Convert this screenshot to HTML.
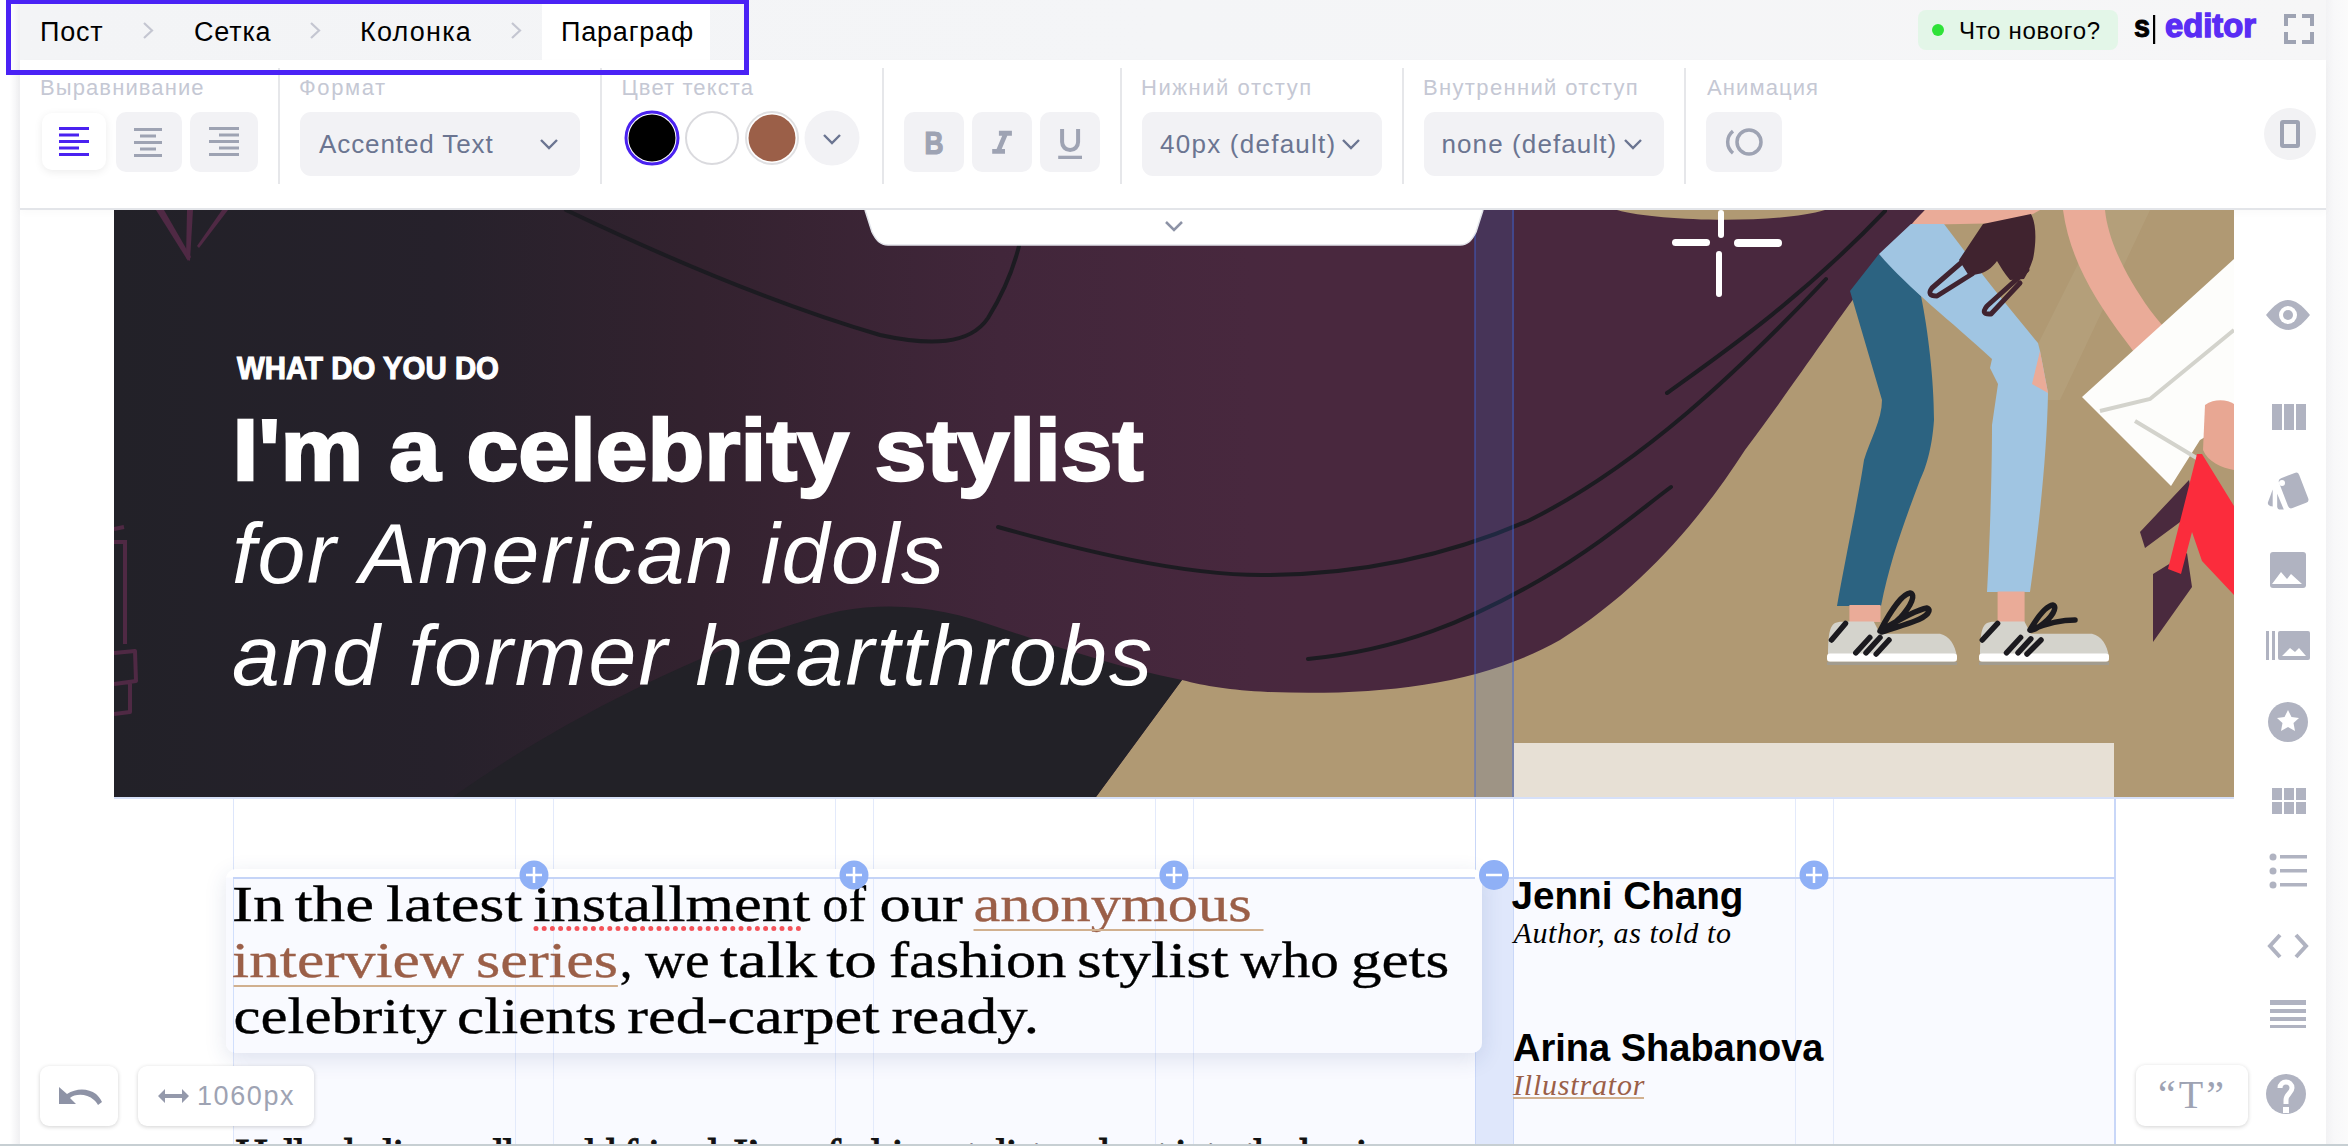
<!DOCTYPE html>
<html><head><meta charset="utf-8">
<style>
*{box-sizing:border-box;margin:0;padding:0}
html,body{width:2348px;height:1146px;overflow:hidden;background:#fff;font-family:"Liberation Sans",sans-serif}
.a{position:absolute}
.lbl{position:absolute;top:73px;font-size:22px;letter-spacing:1.1px;color:#c5c8d4;line-height:30px;white-space:nowrap}
.sep{position:absolute;top:68px;width:2px;height:116px;background:#e6e7ea}
.btn{position:absolute;top:112px;height:60px;background:#f2f2f5;border-radius:10px}
.dd{position:absolute;top:112px;height:64px;background:#f2f2f5;border-radius:11px;font-size:26px;color:#6b7591;line-height:64px;white-space:nowrap;letter-spacing:.8px}
.crumb{position:absolute;top:14px;font-size:27px;line-height:36px;color:#000;white-space:nowrap;letter-spacing:.8px}
.gl{position:absolute;top:797px;width:1px;height:347px;background:#e3eafb}
.sb{position:absolute;fill:#b0b3c1}
</style></head><body>
<!-- left & right outer shadows -->
<div class="a" style="left:0;top:0;width:20px;height:1146px;background:linear-gradient(90deg,#fff 0,#fff 10px,#f1f1f3 19px)"></div>
<div class="a" style="left:2326px;top:0;width:22px;height:1146px;background:linear-gradient(90deg,#f2f2f4 0,#f8f8f9 8px,#fbfbfb 22px)"></div>
<!-- top bar -->
<div class="a" style="left:20px;top:0;width:2306px;height:60px;background:linear-gradient(90deg,#f3f4f6 0,#f4f5f7 50%,#f6f6f7 100%)"></div>
<div class="a" style="left:542px;top:0;width:168px;height:60px;background:#fff"></div>
<div class="crumb" style="left:40px">Пост</div>
<div class="crumb" style="left:194px">Сетка</div>
<div class="crumb" style="left:360px;letter-spacing:1.2px">Колонка</div>
<div class="crumb" style="left:561px">Параграф</div>
<svg class="a" style="left:0;top:0" width="760" height="60"><g fill="none" stroke="#c4c6d1" stroke-width="2.2"><path d="M144 23l8 7.5-8 7.5M311 23l8 7.5-8 7.5M512 23l8 7.5-8 7.5"/></g></svg>
<!-- whats new -->
<div class="a" style="left:1918px;top:10px;width:200px;height:40px;background:#e3f6e8;border-radius:8px"></div>
<div class="a" style="left:1932px;top:24px;width:12px;height:12px;border-radius:50%;background:#2ee238"></div>
<div class="a" style="left:1959px;top:14px;font-size:24px;line-height:34px;letter-spacing:.7px;color:#000;white-space:nowrap">Что нового?</div>
<svg class="a" style="left:2120px;top:0" width="210" height="60">
<text x="14" y="37" font-family="Liberation Sans" font-weight="bold" font-size="32" fill="#000" stroke="#000" stroke-width="1" textLength="16" lengthAdjust="spacingAndGlyphs">s</text>
<rect x="33" y="15" width="2.2" height="29" fill="#000"/>
<text x="45" y="37" font-family="Liberation Sans" font-weight="bold" font-size="33" fill="#5a2df4" stroke="#5a2df4" stroke-width="1.4" textLength="91" lengthAdjust="spacingAndGlyphs">editor</text>
<g fill="none" stroke="#9ea3b3" stroke-width="4"><path d="M166 26V16H176M182 16H192V26M192 32V42H182M176 42H166V32"/></g>
</svg>
<!-- toolbar -->
<div class="a" style="left:20px;top:60px;width:2306px;height:150px;background:#fff;border-bottom:2px solid #e3e5e9;box-shadow:0 3px 8px rgba(0,0,0,.025)"></div>
<div class="lbl" style="left:40px">Выравнивание</div>
<div class="lbl" style="left:299px;letter-spacing:1.6px">Формат</div>
<div class="lbl" style="left:621.5px">Цвет текста</div>
<div class="lbl" style="left:1141px;letter-spacing:1.55px">Нижний отступ</div>
<div class="lbl" style="left:1423px;letter-spacing:1.35px">Внутренний отступ</div>
<div class="lbl" style="left:1707px">Анимация</div>
<div class="sep" style="left:278px"></div>
<div class="sep" style="left:600px"></div>
<div class="sep" style="left:882px"></div>
<div class="sep" style="left:1120px"></div>
<div class="sep" style="left:1402px"></div>
<div class="sep" style="left:1684px"></div>
<!-- align buttons -->
<div class="a" style="left:42px;top:113px;width:64px;height:57px;background:#fff;border-radius:10px;box-shadow:0 2px 8px rgba(0,0,0,.08)"></div>
<div class="btn" style="left:116px;width:66px"></div>
<div class="btn" style="left:190px;width:68px"></div>
<svg class="a" style="left:0;top:100px" width="280" height="90">
<g fill="#4a22f0"><rect x="59" y="27" width="30" height="3"/><rect x="59" y="33.5" width="20" height="3"/><rect x="59" y="40" width="30" height="3"/><rect x="59" y="46.5" width="20" height="3"/><rect x="59" y="53" width="30" height="3"/></g>
<g fill="#9ea3b3"><rect x="134" y="28" width="28" height="3"/><rect x="140" y="34.5" width="16" height="3"/><rect x="134" y="41" width="28" height="3"/><rect x="140" y="47.5" width="16" height="3"/><rect x="134" y="54" width="28" height="3"/></g>
<g fill="#9ea3b3"><rect x="209" y="27" width="30" height="3"/><rect x="219" y="33.5" width="20" height="3"/><rect x="209" y="40" width="30" height="3"/><rect x="219" y="46.5" width="20" height="3"/><rect x="209" y="53" width="30" height="3"/></g>
</svg>
<!-- format dropdown -->
<div class="dd" style="left:300px;width:280px;padding-left:19px;font-size:26px;letter-spacing:.9px">Accented Text</div>
<svg class="a" style="left:538px;top:136px" width="22" height="16"><path d="M3 4l8 8 8-8" fill="none" stroke="#6b7591" stroke-width="2.4"/></svg>
<!-- colours -->
<svg class="a" style="left:620px;top:106px" width="250" height="66">
<circle cx="32" cy="32" r="26" fill="#fff" stroke="#4a22f0" stroke-width="3"/>
<circle cx="32" cy="32" r="23.5" fill="#000"/>
<circle cx="92" cy="32" r="26" fill="#fff" stroke="#dadade" stroke-width="2"/>
<circle cx="152" cy="32" r="26" fill="#fff" stroke="#e0e0e2" stroke-width="2"/>
<circle cx="152" cy="32" r="23.5" fill="#9b5f48"/>
<circle cx="212" cy="32" r="27.5" fill="#f2f2f5"/>
<path d="M204 29l8 8 8-8" fill="none" stroke="#6b7591" stroke-width="2.4"/>
</svg>
<!-- B I U -->
<div class="btn" style="left:904px;width:60px"></div>
<div class="btn" style="left:972px;width:60px"></div>
<div class="btn" style="left:1040px;width:60px"></div>
<svg class="a" style="left:900px;top:120px" width="200" height="44">
<text x="24.5" y="34" font-family="Liberation Sans" font-weight="bold" font-size="31" fill="#9ea3b3" stroke="#9ea3b3" stroke-width="1.2" textLength="19" lengthAdjust="spacingAndGlyphs">B</text>
<path d="M98.9 10.7H111.9V15.8H107.3L101.7 29H105V33.7H92.2V29H96.6L102.2 15.8H98.9Z" fill="#9ea3b3"/>
<path d="M162.1 8.9V22.1A8 8 0 0 0 178.1 22.1V8.9" fill="none" stroke="#9ea3b3" stroke-width="4"/>
<rect x="158.2" y="35.7" width="23.8" height="3.3" fill="#9ea3b3"/>
</svg>
<!-- spacing dropdowns -->
<div class="dd" style="left:1142px;width:240px;padding-left:18px;letter-spacing:1.25px">40px (default)</div>
<svg class="a" style="left:1340px;top:136px" width="22" height="16"><path d="M3 4l8 8 8-8" fill="none" stroke="#6b7591" stroke-width="2.4"/></svg>
<div class="dd" style="left:1424px;width:240px;padding-left:17.5px;letter-spacing:1.1px">none (default)</div>
<svg class="a" style="left:1622px;top:136px" width="22" height="16"><path d="M3 4l8 8 8-8" fill="none" stroke="#6b7591" stroke-width="2.4"/></svg>
<!-- animation -->
<div class="btn" style="left:1706px;width:76px"></div>
<svg class="a" style="left:1716px;top:120px" width="56" height="44"><circle cx="33" cy="22" r="12" fill="none" stroke="#9ea3b3" stroke-width="3.5"/><path d="M17 11a14 14 0 0 0 0 22" fill="none" stroke="#9ea3b3" stroke-width="3.5"/></svg>
<!-- device -->
<div class="a" style="left:2264px;top:108px;width:52px;height:52px;border-radius:50%;background:#f2f2f4"></div>
<div class="a" style="left:2280px;top:120px;width:20px;height:28px;border:4px solid #9ea3b3;border-radius:3px"></div>

<!-- HERO -->
<svg class="a" style="left:114px;top:210px" width="2120" height="587" viewBox="114 210 2120 587">
<defs>
<linearGradient id="hg" x1="114" y1="0" x2="1300" y2="0" gradientUnits="userSpaceOnUse">
<stop offset="0" stop-color="#222128"/><stop offset=".275" stop-color="#26212b"/><stop offset=".494" stop-color="#33222f"/><stop offset=".747" stop-color="#41263a"/><stop offset=".958" stop-color="#48283e"/><stop offset="1" stop-color="#49283e"/></linearGradient>
<linearGradient id="tg" x1="0" y1="210" x2="0" y2="420" gradientUnits="userSpaceOnUse"><stop offset="0" stop-color="#bba784"/><stop offset="1" stop-color="#b09973"/></linearGradient>
</defs>
<rect x="114" y="210" width="2120" height="587" fill="#b09973"/>
<!-- lighter diagonal stripe top right -->
<path d="M2105 210L2150 210 2060 400 2010 400Z" fill="#b8a47f" opacity=".6"/>
<!-- right pink arm -->
<path d="M2063 210C2070 260 2095 300 2125 340 2140 360 2155 380 2165 392L2200 372C2185 350 2165 330 2150 310 2125 275 2108 240 2105 210Z" fill="#eaab98"/>
<!-- cape + dark left region -->
<path d="M114 210H1617C1660 222 1780 224 1825 210H1925C1905 236 1880 262 1860 290 1830 330 1790 390 1745 450 1700 520 1640 590 1560 640 1480 685 1380 696 1268 692 1230 690 1205 686 1182 680L1096 797H114Z" fill="url(#hg)"/>
<!-- dark hill bottom -->
<path d="M453 797C560 720 720 640 840 611 900 600 950 610 1000 628 1060 648 1120 668 1182 680L1096 797Z" fill="#222127"/>
<!-- lines on cape -->
<g fill="none" stroke="#1c1b21" stroke-width="4" stroke-linecap="round">
<path d="M566 210C650 250 770 303 880 335 930 346 970 345 988 318 1004 292 1014 266 1019 246"/>
<path d="M998 527C1080 550 1180 575 1262 575 1360 575 1450 555 1530 520 1640 465 1740 370 1826 279"/>
<path d="M1308 659C1400 650 1470 620 1540 580 1600 545 1640 510 1671 487"/>
<path d="M1667 393C1720 355 1800 300 1885 211"/>
</g>
<!-- sparkle -->
<g fill="#fff"><rect x="1672" y="239" width="38" height="7" rx="3.5"/><rect x="1734" y="239" width="48" height="8" rx="4"/><rect x="1718" y="210" width="6" height="28" rx="3"/><rect x="1716" y="251" width="6" height="46" rx="3"/></g>
<!-- top pink arm band -->
<path d="M1925 210H2040C2030 216 2020 220 2010 223L1911 225C1915 220 1920 215 1925 210Z" fill="#eaab98"/>
<!-- teal leg -->
<path d="M1879 254L1921 296C1928 330 1934 380 1934 420 1932 450 1925 470 1920 480 1905 520 1890 560 1881 606H1837C1845 560 1858 500 1864 460 1870 440 1882 420 1882 400L1850 291Z" fill="#2c6381"/>
<!-- light blue leg -->
<path d="M1911 224H1944L1963 249C1990 285 2015 315 2038 343L2040 351 2048 393C2047 450 2040 520 2030 592H1987C1990 540 1992 470 1992 425L1998 384 1990 368 1992 359C1950 320 1910 290 1879 254Z" fill="#a0c5e2"/>
<!-- knee skin -->
<path d="M2040 351L2048 393 2032 384Z" fill="#eaab98"/>
<!-- ankle skin -->
<path d="M1849.4 605H1880.5V622H1849.4Z M1997.6 591.5H2024.6V622H1997.6Z" fill="#eaab98"/>
<!-- hand -->
<path d="M1983 224L2031 214C2037 225 2036 245 2033 259 2030 268 2027 274 2024 279L2010 280C2004 273 2000 266 1997 261 1992 268 1985 273 1978 274L1969 276 1959 260Z" fill="#40232f"/>
<g fill="none" stroke="#40232f" stroke-width="5" stroke-linejoin="round" stroke-linecap="round">
<path d="M1962 262L1932 288Q1926 296 1937 296L1972 274"/>
<path d="M2027 270L1987 306Q1980 315 1991 314L2020 283"/>
</g>
<!-- bag -->
<path d="M2082 397L2234 259V420L2200 440 2171 486Z" fill="#fdfdfb"/>
<path d="M2100 411L2150 399 2234 330M2135 421L2200 460" fill="none" stroke="#d3d3cc" stroke-width="4"/>
<path d="M2205 405C2215 398 2228 400 2234 404V470C2222 468 2208 462 2203 450Z" fill="#e8a793"/>
<!-- shoes on right -->
<path d="M2140 532L2189 480 2195 511 2145 548Z M2153 574L2187 553 2192 587 2153 642Z" fill="#4a2a3e"/>
<path d="M2168 569L2197 454H2202L2234 506V595L2202 561 2192 532 2181 574Z" fill="#fb2c3c"/>
<!-- sneakers -->
<g>
<path d="M1828 656C1828 640 1829 630 1832 626 1834 622 1840 621.5 1848 621.5H1873.7L1880 633.7H1940C1950 636 1955 645 1957 656.7Z" fill="#d4d3cc"/>
<rect x="1827" y="653.5" width="130" height="8.3" rx="3" fill="#fff"/>
<rect x="1827" y="661.8" width="130" height="3.2" fill="#a29c8f"/>
<path d="M1980 656C1980 640 1981 630 1984 626 1986 622 1992 621.5 2000 621.5H2024.4L2030.8 633.7H2092C2102 636 2107 645 2109 656.7Z" fill="#d4d3cc"/>
<rect x="1979" y="653.5" width="130" height="8.3" rx="3" fill="#fff"/>
<rect x="1979" y="661.8" width="130" height="3.2" fill="#a29c8f"/>
<g fill="none" stroke="#1b1a1f" stroke-width="5.5" stroke-linecap="round" stroke-linejoin="round">
<path d="M1880 631C1890 612 1902 594 1910 593 1916 594 1912 605 1900 618 1893 625 1886 630 1880 631 1895 622 1915 610 1927 608 1932 610 1928 616 1915 621 1905 625 1893 628 1882 632"/>
<path d="M1831.5 640L1845.5 623.4M1855.8 652.8L1869.8 637.5M1866 652.8L1880 637.5M1876.2 654L1889 640"/>
<path d="M2030 630C2037 618 2046 606 2053 605 2058 607 2052 618 2040 626 2034 630 2031 631 2030 630 2045 624 2062 620 2075 620"/>
<path d="M1982.3 640L1997.6 623.4M2006.5 652.8L2020.6 637.5M2018 652.8L2030.8 638.8M2027 654L2041 640"/>
</g>
</g>
<!-- beige platform -->
<rect x="1514" y="743" width="600" height="54" fill="#e7e0d5"/>
<!-- left faint decorations -->
<g fill="#4f2944">
<path d="M156 210H164L191 257 188 261Z"/><path d="M187 210H193L190 261 186 258Z"/><path d="M222 210H228L199 248 197 246Z"/>
</g>
<g fill="none" stroke="#4f2944" stroke-width="4" stroke-linejoin="round">
<path d="M114 529L124 527M114 542H127M125 542V644"/>
<path d="M114 653L135 651 136 681 114 684M114 684L130 682 130 712 114 714"/>
</g>
<!-- gutter overlay -->
<rect x="1475" y="210" width="39" height="587" fill="rgb(60,120,240)" fill-opacity=".15"/>
<rect x="1474" y="210" width="2" height="587" fill="rgb(60,100,220)" fill-opacity=".4"/>
<rect x="1512" y="210" width="2" height="587" fill="rgb(60,100,220)" fill-opacity=".4"/>
<!-- white tab -->
<path d="M865 210L872 232C876 240 880 245 888 245H1460C1468 245 1472 240 1476 232L1483 210" fill="#fff" stroke="#e2e4ea" stroke-width="1.5"/>
<path d="M1166 222l8 8 8-8" fill="none" stroke="#8d93a6" stroke-width="2.5"/>
</svg>

<!-- content area -->
<div class="a" style="left:233px;top:878px;width:1882px;height:266px;background:#f9faff"></div>
<div class="a" style="left:1475px;top:878px;width:39px;height:266px;background:#dfe7fb"></div>
<div class="gl" style="left:233px;background:#dde6fb"></div>
<div class="gl" style="left:515px"></div><div class="gl" style="left:553px"></div>
<div class="gl" style="left:835px"></div><div class="gl" style="left:873px"></div>
<div class="gl" style="left:1155px"></div><div class="gl" style="left:1193px"></div>
<div class="gl" style="left:1475px;background:#c9d7f8"></div><div class="gl" style="left:1513px;background:#c9d7f8"></div>
<div class="gl" style="left:1795px"></div><div class="gl" style="left:1833px"></div>
<div class="gl" style="left:2114px;width:2px;background:#c9d7f8"></div>
<div class="a" style="left:114px;top:797px;width:2120px;height:2px;background:#d6e0f8"></div>
<div class="a" style="left:233px;top:877px;width:1882px;height:2px;background:#c5d4f7"></div>
<!-- paragraph card -->
<div class="a" style="left:226px;top:869px;width:1256px;height:184px;background:linear-gradient(#fff 0,#fff 8px,#f9faff 9px);border-radius:10px;box-shadow:0 6px 22px rgba(40,60,120,.13)"></div>
<div class="a" style="left:233px;top:877px;width:1242px;height:2px;background:#c5d4f7"></div>
<div class="a" style="left:515px;top:879px;width:1px;height:174px;background:rgba(170,195,250,.3)"></div><div class="a" style="left:553px;top:879px;width:1px;height:174px;background:rgba(170,195,250,.3)"></div>
<div class="a" style="left:835px;top:879px;width:1px;height:174px;background:rgba(170,195,250,.3)"></div><div class="a" style="left:873px;top:879px;width:1px;height:174px;background:rgba(170,195,250,.3)"></div>
<div class="a" style="left:1155px;top:879px;width:1px;height:174px;background:rgba(170,195,250,.3)"></div><div class="a" style="left:1193px;top:879px;width:1px;height:174px;background:rgba(170,195,250,.3)"></div>
<div class="a" style="left:233px;top:879px;width:1px;height:174px;background:rgba(170,195,250,.5)"></div>
<svg class="a" style="left:0;top:0" width="2348" height="1146">
<g font-family="Liberation Serif" font-size="51" fill="#000" stroke="#000" stroke-width=".35">
<text x="232.1" y="920.8" textLength="52.4" lengthAdjust="spacingAndGlyphs">In</text>
<text x="294.8" y="920.8" textLength="79.3" lengthAdjust="spacingAndGlyphs">the</text>
<text x="386.1" y="920.8" textLength="136.4" lengthAdjust="spacingAndGlyphs">latest</text>
<text x="533.3" y="920.8" textLength="276.9" lengthAdjust="spacingAndGlyphs">installment</text>
<text x="822.2" y="920.8" textLength="43.8" lengthAdjust="spacingAndGlyphs">of</text>
<text x="879.4" y="920.8" textLength="83.4" lengthAdjust="spacingAndGlyphs">our</text>
<text x="973.4" y="920.8" textLength="278.3" lengthAdjust="spacingAndGlyphs" fill="#9b5f48" stroke="#9b5f48">anonymous</text>
<text x="232.1" y="977.3" textLength="232.0" lengthAdjust="spacingAndGlyphs" fill="#9b5f48" stroke="#9b5f48">interview</text>
<text x="476.1" y="977.3" textLength="142.0" lengthAdjust="spacingAndGlyphs" fill="#9b5f48" stroke="#9b5f48">series</text>
<text x="619.7" y="977.3">,</text>
<text x="645.0" y="977.3" textLength="64.4" lengthAdjust="spacingAndGlyphs">we</text>
<text x="720.0" y="977.3" textLength="97.0" lengthAdjust="spacingAndGlyphs">talk</text>
<text x="826.3" y="977.3" textLength="50.6" lengthAdjust="spacingAndGlyphs">to</text>
<text x="888.9" y="977.3" textLength="177.5" lengthAdjust="spacingAndGlyphs">fashion</text>
<text x="1077.0" y="977.3" textLength="151.5" lengthAdjust="spacingAndGlyphs">stylist</text>
<text x="1240.5" y="977.3" textLength="98.4" lengthAdjust="spacingAndGlyphs">who</text>
<text x="1350.9" y="977.3" textLength="98.4" lengthAdjust="spacingAndGlyphs">gets</text>
<text x="233.5" y="1032.7" textLength="212.9" lengthAdjust="spacingAndGlyphs">celebrity</text>
<text x="457.0" y="1032.7" textLength="159.7" lengthAdjust="spacingAndGlyphs">clients</text>
<text x="627.3" y="1032.7" textLength="252.2" lengthAdjust="spacingAndGlyphs">red-carpet</text>
<text x="891.6" y="1032.7" textLength="147.5" lengthAdjust="spacingAndGlyphs">ready.</text>
</g>
<rect x="973.5" y="929" width="290" height="2" fill="#d1b08f"/>
<rect x="233.6" y="985" width="384.3" height="2" fill="#d1b08f"/>
<path d="M536 928.5H804" stroke="#f4535a" stroke-width="5" stroke-linecap="round" stroke-dasharray="0 8.2"/>
<g font-family="Liberation Sans" font-weight="bold" font-size="38" fill="#000">
<text x="1511.5" y="909" textLength="232" lengthAdjust="spacingAndGlyphs">Jenni Chang</text>
<text x="1513" y="1061">Arina Shabanova</text>
</g>
<g font-family="Liberation Serif" font-style="italic" font-size="30" fill="#000" style="letter-spacing:.6px">
<text x="1513.5" y="942.8" textLength="218" lengthAdjust="spacing">Author, as told to</text>
<text x="1513" y="1095.3" fill="#9b5f48" textLength="132" lengthAdjust="spacing">Illustrator</text>
</g>
<rect x="1513" y="1097" width="131" height="2" fill="#d1b08f"/>
<g font-family="Liberation Serif" font-size="46" fill="#111" stroke="#111" stroke-width=".8">
<text x="235" y="1171" textLength="1133" lengthAdjust="spacing">Hello darlings, all world friend. I&#8217;m a fashion stylist and got into the busi</text>
</g>
<!-- plus/minus buttons -->
<g fill="#8fb0f6">
<circle cx="534" cy="875" r="14.5"/><circle cx="854" cy="875" r="14.5"/><circle cx="1174" cy="875" r="14.5"/><circle cx="1494" cy="875" r="15"/><circle cx="1814" cy="875" r="14.5"/>
</g>
<g stroke="#fff" stroke-width="2.5">
<path d="M534 867V883M526 875H542M854 867V883M846 875H862M1174 867V883M1166 875H1182M1486 875H1502M1814 867V883M1806 875H1822"/>
</g>
</svg>
<!-- bottom-left buttons -->
<div class="a" style="left:40px;top:1066px;width:78px;height:60px;background:#fff;border-radius:9px;box-shadow:0 1px 4px rgba(0,0,0,.18)"></div>
<svg class="a" style="left:56px;top:1084px" width="48" height="26"><path d="M3 3V20H20L14 14C19 10 30 9 38 16 40 18 41 19 42 21L46 18C44 14 42 12 40 10 32 4 20 4 11 10Z" fill="#8e93a6"/></svg>
<div class="a" style="left:138px;top:1066px;width:176px;height:60px;background:#fff;border-radius:9px;box-shadow:0 1px 4px rgba(0,0,0,.18)"></div>
<svg class="a" style="left:156px;top:1086px" width="36" height="20"><path d="M2 10L9 3V8H26V3L33 10 26 17V12H9V17Z" fill="#9499ab"/></svg>
<div class="a" style="left:197px;top:1078px;font-size:27px;line-height:36px;color:#9ea3b3;letter-spacing:1.6px">1060px</div>
<!-- quote button -->
<div class="a" style="left:2136px;top:1065px;width:112px;height:61px;background:#fff;border-radius:9px;box-shadow:0 1px 4px rgba(0,0,0,.18)"></div>
<div class="a" style="left:2158px;top:1072px;font-family:'Liberation Serif';font-size:40px;line-height:46px;color:#9ea3b3;letter-spacing:3px">&#8220;T&#8221;</div>
<!-- right sidebar icons -->
<svg class="a" style="left:2250px;top:280px" width="76" height="840">
<g fill="#b0b3c1">
<path d="M16 35C24 25 31 20 38 20S52 25 60 35C52 45 45 50 38 50S24 45 16 35Z"/>
<circle cx="38" cy="35" r="9" fill="#fff"/><circle cx="38" cy="35" r="5"/>
<rect x="22" y="124" width="10" height="26"/><rect x="34" y="124" width="10" height="26"/><rect x="46" y="124" width="10" height="26"/>
<rect x="-10.8" y="-16" width="21.6" height="32" rx="3.5" transform="translate(43.6 210.5) rotate(-21)"/><path d="M22.7 209.4L17.9 222.5C17.5 225 20 226.5 22.7 226.4Z"/><path d="M27.2 213.8V226.9C27.5 228.5 28.5 229.5 29.6 229.5H33.8Z"/>
<rect x="20" y="272" width="36" height="36" rx="3"/>
<rect x="16" y="351" width="3" height="29"/><rect x="22" y="351" width="3" height="29"/><rect x="28" y="351" width="32" height="29" rx="2"/>
<circle cx="38" cy="442" r="20"/>
<rect x="22" y="508" width="10" height="12"/><rect x="34" y="508" width="10" height="12"/><rect x="46" y="508" width="10" height="12"/>
<rect x="22" y="522" width="10" height="12"/><rect x="34" y="522" width="10" height="12"/><rect x="46" y="522" width="10" height="12"/>
<circle cx="23" cy="577" r="3.5"/><circle cx="23" cy="591" r="3.5"/><circle cx="23" cy="605" r="3.5"/>
<rect x="30" y="575" width="27" height="3.5"/><rect x="30" y="589" width="27" height="3.5"/><rect x="30" y="603" width="27" height="3.5"/>
<rect x="20" y="720" width="36" height="5"/><rect x="20" y="729" width="36" height="4"/><rect x="20" y="737" width="36" height="4"/><rect x="20" y="745" width="36" height="3"/>
<circle cx="36" cy="814" r="20"/>
</g>
<circle cx="32" cy="202.9" r="3" fill="#fff"/>
<path d="M22 304L31 292 37 299 41 294 52 304Z" fill="#fff"/>
<path d="M32 376L40 368 45 372 49 368 56 376Z" fill="#fff"/>
<path d="M38 430L41.5 437 49 438 43.5 443 45 451 38 447 31 451 32.5 443 27 438 34.5 437Z" fill="#fff"/>
<path d="M30 655L20 666 30 677M46 655L56 666 46 677" fill="none" stroke="#b0b3c1" stroke-width="4"/>
<path d="M30 808C30 800 42 800 42 808 42 813 36 814 36 820V824" fill="none" stroke="#fff" stroke-width="5"/><rect x="33" y="827" width="6" height="6" fill="#fff"/>
</svg>
<!-- hero text -->
<svg class="a" style="left:0;top:0" width="2348" height="1146">
<g fill="#fff" font-family="Liberation Sans">
<text x="237" y="378.8" font-size="31.5" font-weight="bold" stroke="#fff" stroke-width="1.1" textLength="262" lengthAdjust="spacingAndGlyphs">WHAT DO YOU DO</text>
<text x="232.5" y="480" font-size="88" font-weight="bold" stroke="#fff" stroke-width="2.4" textLength="911" lengthAdjust="spacingAndGlyphs">I'm a celebrity stylist</text>
<text x="232" y="583.2" font-size="86" font-style="italic" textLength="712" lengthAdjust="spacing">for American idols</text>
<text x="232" y="685.3" font-size="86" font-style="italic" textLength="920" lengthAdjust="spacing">and former heartthrobs</text>
</g>
</svg>
<!-- purple breadcrumb outline -->
<div class="a" style="left:6px;top:-1px;width:743px;height:76px;border:5px solid #4a22f5"></div>
<!-- bottom strip -->
<div class="a" style="left:0;top:1144px;width:2348px;height:2px;background:#c7cfd3"></div>
</body></html>
